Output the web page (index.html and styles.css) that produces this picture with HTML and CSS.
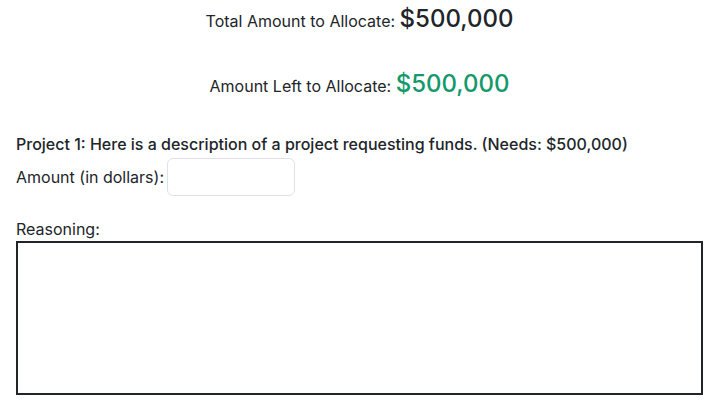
FILE: index.html
```html
<!DOCTYPE html>
<html>
<head>
<meta charset="utf-8">
<link rel="stylesheet" href="styles.css">
</head>
<body>
<div class="page">
  <p class="summary">Total Amount to Allocate: <span class="big">$500,000</span></p>
  <p class="summary second">Amount Left to Allocate: <span class="big green">$500,000</span></p>
  <div class="project">
    <p class="title">Project 1: Here is a description of a project requesting funds. (Needs: $500,000)</p>
    <div class="amount-row">
      <label class="lbl">Amount (in dollars):</label>
      <input class="amount" type="text">
    </div>
    <label class="lbl reason-lbl">Reasoning:</label>
    <textarea class="reason"></textarea>
  </div>
</div>
</body>
</html>
```

FILE: styles.css
```css
* { box-sizing: border-box; }
html, body { margin: 0; padding: 0; background: #fff; }
body {
  font-family: Inter, "Noto Sans", sans-serif;
  font-size: 16px;
  color: #212529;
  line-height: 1.5;
}
.page { padding: 0 10px 0 16px; }
.summary {
  margin: 0;
  text-align: center;
  line-height: 36px;
  padding-top: 1px;
}
.summary.second { margin-top: 26px; }
.big { font-size: 24px; font-weight: 500; }
.green { color: #13996b; }
.project { margin-top: 28px; }
.title { margin: 0; font-weight: 500; line-height: 24px; }
.amount-row { display: flex; align-items: center; gap: 3px; margin-top: 2px; }
.amount {
  width: 128px;
  height: 38px;
  border: 1px solid #dee2e6;
  border-radius: 6px;
  font: inherit;
  padding: 6px 12px;
}
.lbl { display: block; }
.reason-lbl { margin-top: 22px; line-height: 23px; }
.reason {
  display: block;
  width: 687px;
  height: 154px;
  border: 2px solid #212529;
  border-radius: 0;
  resize: none;
  margin: 0;
  font: inherit;
}
```
